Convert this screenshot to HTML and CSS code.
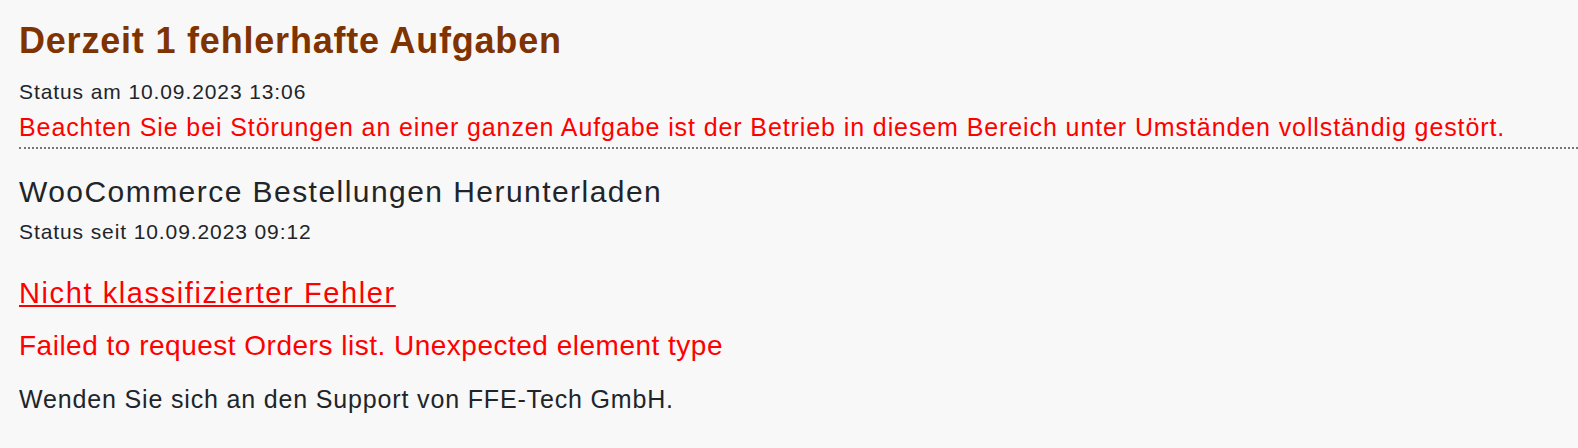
FILE: index.html
```html
<!DOCTYPE html>
<html lang="de">
<head>
<meta charset="utf-8">
<title>Fehlerhafte Aufgaben</title>
<link rel="stylesheet" href="styles.css">
</head>
<body>
<div class="page">
  <header class="summary">
    <h1 class="summary-title">Derzeit 1 fehlerhafte Aufgaben</h1>
    <div class="summary-status">Status am 10.09.2023 13:06</div>
    <div class="summary-warning">Beachten Sie bei Störungen an einer ganzen Aufgabe ist der Betrieb in diesem Bereich unter Umständen vollständig gestört.</div>
  </header>
  <section class="task">
    <h2 class="task-name">WooCommerce Bestellungen Herunterladen</h2>
    <div class="task-since">Status seit 10.09.2023 09:12</div>
    <a class="task-error-link" href="#">Nicht klassifizierter Fehler</a>
    <div class="task-error-message">Failed to request Orders list. Unexpected element type</div>
    <div class="task-support">Wenden Sie sich an den Support von FFE-Tech GmbH.</div>
  </section>
</div>
</body>
</html>
```
FILE: styles.css
```css
html, body {
  margin: 0;
  padding: 0;
  background: #f8f8f8;
}
body {
  font-family: "Liberation Sans", Arial, Helvetica, sans-serif;
  color: #212529;
}
.page {
  padding: 20px 0 0 19px;
}
.summary {
  border-bottom: 2px dotted #777;
  padding-bottom: 5px;
}
.summary-title {
  margin: 0;
  font-size: 36px;
  font-weight: bold;
  letter-spacing: 0.8px;
  color: #7f3300;
  line-height: 42px;
}
.summary-status {
  margin-top: 17px;
  font-size: 21px;
  letter-spacing: 0.9px;
  line-height: 26px;
}
.summary-warning {
  margin-top: 7px;
  font-size: 25px;
  letter-spacing: 0.9px;
  line-height: 30px;
  color: #ff0000;
}
.task {
  display: flex;
  flex-direction: column;
  align-items: flex-start;
  padding-top: 25px;
}
.task-name {
  margin: 0;
  font-size: 30px;
  font-weight: normal;
  letter-spacing: 1.45px;
  line-height: 36px;
}
.task-since {
  margin-top: 9px;
  font-size: 21px;
  letter-spacing: 0.9px;
  line-height: 26px;
}
.task-error-link {
  margin-top: 31px;
  font-size: 29px;
  letter-spacing: 1.6px;
  line-height: 34px;
  color: #ff0000;
  text-decoration: underline;
}
.task-error-message {
  margin-top: 19px;
  font-size: 28px;
  letter-spacing: 0.5px;
  line-height: 34px;
  color: #ff0000;
}
.task-support {
  margin-top: 21px;
  font-size: 25px;
  letter-spacing: 0.84px;
  line-height: 30px;
}
```
